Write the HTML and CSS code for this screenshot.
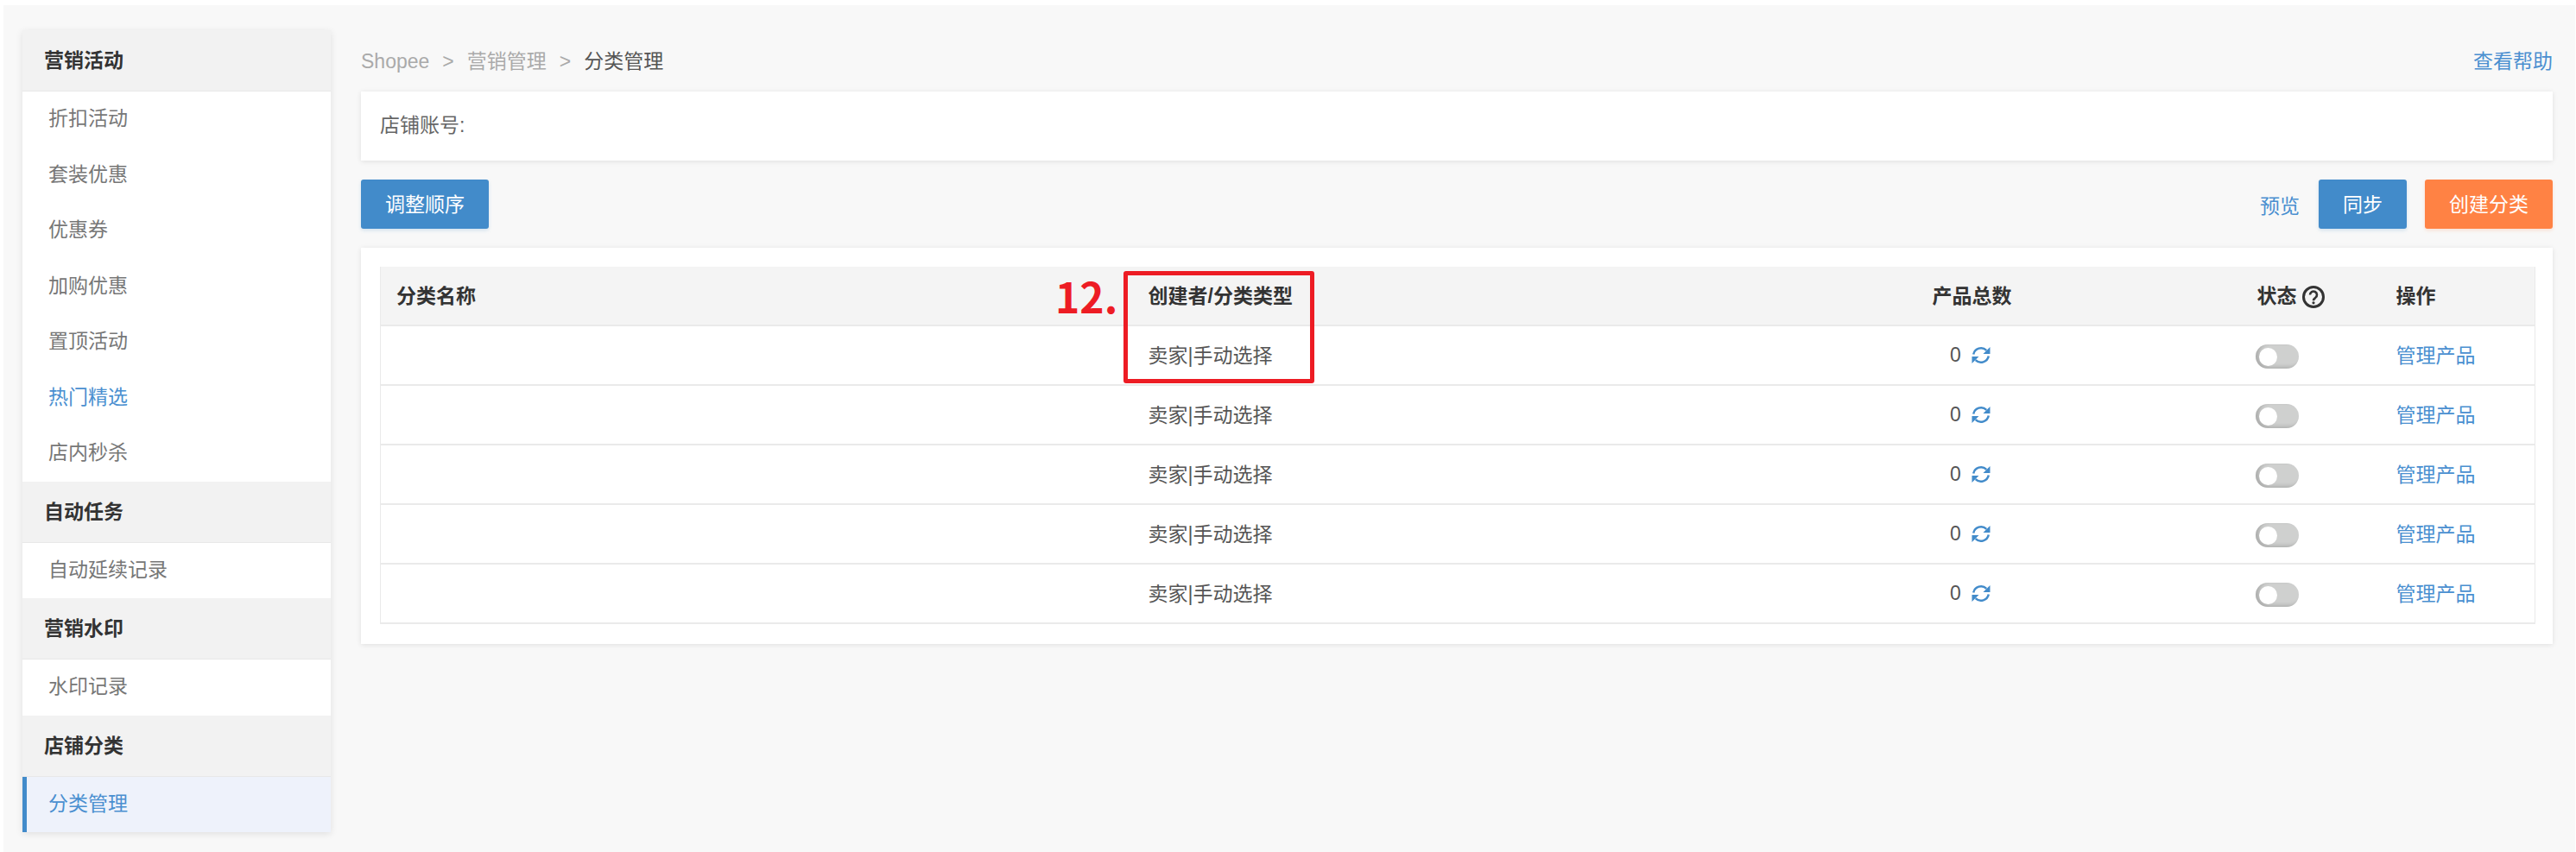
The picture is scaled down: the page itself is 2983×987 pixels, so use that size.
FILE: index.html
```html
<!DOCTYPE html>
<html lang="zh-CN">
<head>
  <meta charset="UTF-8" />
  <title>分类管理</title>
  <link rel="stylesheet" href="styles.css">
</head>
<body>
  <svg class="icon-defs">
    <symbol id="sync" viewBox="0 0 22 21">
      <path d="M2.200 9.500A9 9 0 0 1 17.300 4.800M19.800 11.500A9 9 0 0 1 4.700 16.200" fill="none" stroke="#428bca" stroke-width="2.500"/>
      <path d="M21.500 1v8h-8zM.5 20v-8h8z" fill="#428bca"/>
    </symbol>
  </svg>

  <div class="page">
    <aside class="sidebar">
      <div class="side-title">营销活动</div>
      <a class="side-item">折扣活动</a>
      <a class="side-item">套装优惠</a>
      <a class="side-item">优惠券</a>
      <a class="side-item">加购优惠</a>
      <a class="side-item">置顶活动</a>
      <a class="side-item side-link">热门精选</a>
      <a class="side-item">店内秒杀</a>
      <div class="side-title">自动任务</div>
      <a class="side-item">自动延续记录</a>
      <div class="side-title">营销水印</div>
      <a class="side-item">水印记录</a>
      <div class="side-title">店铺分类</div>
      <a class="side-item side-active">分类管理</a>
    </aside>

    <main class="main">
      <div class="crumb-row">
        <div class="crumbs">
          <span class="crumb">Shopee</span><span class="crumb-sep">&gt;</span><span class="crumb">营销管理</span><span class="crumb-sep">&gt;</span><span class="crumb-now">分类管理</span>
        </div>
        <a class="link">查看帮助</a>
      </div>

      <div class="card shop-card">店铺账号:</div>

      <div class="action-row">
        <button type="button" class="btn btn-blue">调整顺序</button>
        <div class="action-right">
          <a class="link preview">预览</a>
          <button type="button" class="btn btn-blue">同步</button>
          <button type="button" class="btn btn-orange">创建分类</button>
        </div>
      </div>

      <div class="card table-card">
        <table class="cat-table">
          <colgroup>
            <col class="col-name"><col class="col-type"><col class="col-count"><col class="col-status"><col class="col-op">
          </colgroup>
          <thead>
            <tr>
              <th>分类名称</th>
              <th>创建者/分类类型</th>
              <th class="center">产品总数</th>
              <th class="status-cell">状态 <svg class="help-icon" viewBox="0 0 26 26"><circle cx="13" cy="13" r="11.500" fill="none" stroke="#333" stroke-width="3"/><path d="M9 10.500a4 4 0 1 1 6.300 3.300c-1.500 1-2.300 1.700-2.300 3.400" fill="none" stroke="#333" stroke-width="2.600"/><circle cx="13" cy="19.800" r="1.600" fill="#333"/></svg></th>
              <th>操作</th>
            </tr>
          </thead>
          <tbody>
            <tr>
              <td></td><td>卖家|手动选择</td>
              <td class="center"><span class="count">0<svg class="sync-icon"><use href="#sync"/></svg></span></td>
              <td class="status-cell"><span class="toggle"></span></td>
              <td><a class="link">管理产品</a></td>
            </tr>
            <tr>
              <td></td><td>卖家|手动选择</td>
              <td class="center"><span class="count">0<svg class="sync-icon"><use href="#sync"/></svg></span></td>
              <td class="status-cell"><span class="toggle"></span></td>
              <td><a class="link">管理产品</a></td>
            </tr>
            <tr>
              <td></td><td>卖家|手动选择</td>
              <td class="center"><span class="count">0<svg class="sync-icon"><use href="#sync"/></svg></span></td>
              <td class="status-cell"><span class="toggle"></span></td>
              <td><a class="link">管理产品</a></td>
            </tr>
            <tr>
              <td></td><td>卖家|手动选择</td>
              <td class="center"><span class="count">0<svg class="sync-icon"><use href="#sync"/></svg></span></td>
              <td class="status-cell"><span class="toggle"></span></td>
              <td><a class="link">管理产品</a></td>
            </tr>
            <tr>
              <td></td><td>卖家|手动选择</td>
              <td class="center"><span class="count">0<svg class="sync-icon"><use href="#sync"/></svg></span></td>
              <td class="status-cell"><span class="toggle"></span></td>
              <td><a class="link">管理产品</a></td>
            </tr>
          </tbody>
        </table>

        <div class="note-num">12.</div>
        <div class="note-box"></div>
      </div>
    </main>
  </div>
</body>
</html>
```

FILE: styles.css
```css
* {
  box-sizing: border-box;
}
html, body {
  height: 100%;
}
body {
  margin: 0;
  padding: 6px 1px 0 4px;
  background: #fff;
  font-family: "Liberation Sans", "Noto Sans CJK SC", sans-serif;
  font-size: 23px;
  color: #555;
}
.icon-defs {
  display: none;
}
.page {
  display: flex;
  align-items: flex-start;
  gap: 35px;
  height: 100%;
  padding: 29px 26px 0 22px;
  background: #f8f8f8;
}
.sidebar {
  flex: 0 0 357px;
  background: #fff;
  box-shadow: 0 2px 8px rgba(0, 0, 0, 0.1);
}
.side-title {
  height: 71px;
  padding-left: 25px;
  line-height: 71px;
  font-weight: bold;
  color: #333;
  background: #f2f2f2;
  border-bottom: 1px solid #e8e8e8;
}
.side-item {
  display: block;
  height: 64.5px;
  padding-left: 30px;
  line-height: 63px;
  color: #777;
}
.side-link {
  color: #4a8fd0;
}
.side-active {
  padding-left: 25px;
  color: #4a8fd0;
  background: #eef2fb;
  border-left: 5px solid #428bca;
}
.main {
  flex: 1;
  min-width: 0;
}
.crumb-row {
  display: flex;
  justify-content: space-between;
  align-items: center;
  height: 71px;
  padding-bottom: 4px;
}
.crumb {
  color: #aaa;
}
.crumb-sep {
  margin: 0 15px;
  color: #aaa;
}
.crumb-now {
  color: #555;
}
.link {
  color: #4a8fd0;
}
.card {
  background: #fff;
  box-shadow: 0 1px 6px rgba(0, 0, 0, 0.1);
}
.shop-card {
  height: 80px;
  padding-left: 22px;
  line-height: 78px;
  color: #666;
}
.action-row {
  display: flex;
  justify-content: space-between;
  margin: 22px 0;
}
.action-right {
  display: flex;
  align-items: center;
}
.preview {
  margin-right: 22px;
}
.btn {
  height: 57px;
  padding: 0 28px 3px;
  border: none;
  border-radius: 3px;
  font: inherit;
  color: #fff;
  cursor: pointer;
}
.btn-blue {
  background: #428bca;
  box-shadow: 0 2px 4px rgba(66, 139, 202, 0.2);
}
.btn-orange {
  margin-left: 21px;
  background: #ff8244;
  box-shadow: 0 2px 4px rgba(255, 130, 68, 0.2);
}
.table-card {
  position: relative;
  padding: 22px 22px 23px;
}
.cat-table {
  width: 100%;
  table-layout: fixed;
  border-collapse: collapse;
  border: 1px solid #eaeaea;
  border-top: none;
}
.col-name { width: 871px; }
.col-type { width: 663px; }
.col-count { width: 618px; }
.col-status { width: 164px; }
.col-op { width: 179px; }
th, td {
  height: 69px;
  padding: 0 0 3px 18px;
  text-align: left;
  border-bottom: 2px solid #eaeaea;
}
th {
  height: 68px;
  font-weight: bold;
  color: #333;
  background: #f4f4f4;
}
.center {
  padding-left: 0;
  text-align: center;
}
.status-cell {
  padding-left: 21px;
}
.count {
  display: inline-flex;
  align-items: center;
  gap: 12px;
  margin: 3px 4px 0 0;
  vertical-align: middle;
}
.help-icon {
  width: 26px;
  height: 26px;
  vertical-align: -6px;
}
.sync-icon {
  width: 22px;
  height: 21px;
}
.toggle {
  position: relative;
  display: inline-block;
  width: 50px;
  height: 28px;
  margin: 5px 0 0 -2px;
  vertical-align: middle;
  border-radius: 14px;
  background: #cfd0cf;
  box-shadow: inset 4px -2px 4px rgba(0, 0, 0, 0.16);
}
.toggle::after {
  content: "";
  position: absolute;
  left: 4px;
  top: 4px;
  width: 21px;
  height: 21px;
  border-radius: 50%;
  background: #fff;
}
.note-box {
  position: absolute;
  left: 883px;
  top: 27px;
  width: 221px;
  height: 130px;
  border: 5px solid #ed1c24;
  border-radius: 3px;
}
.note-num {
  position: absolute;
  left: 804px;
  top: 21px;
  font-family: "Noto Sans CJK SC", sans-serif;
  font-size: 48px;
  font-weight: bold;
  line-height: 68px;
  color: #ed1c24;
}
```
